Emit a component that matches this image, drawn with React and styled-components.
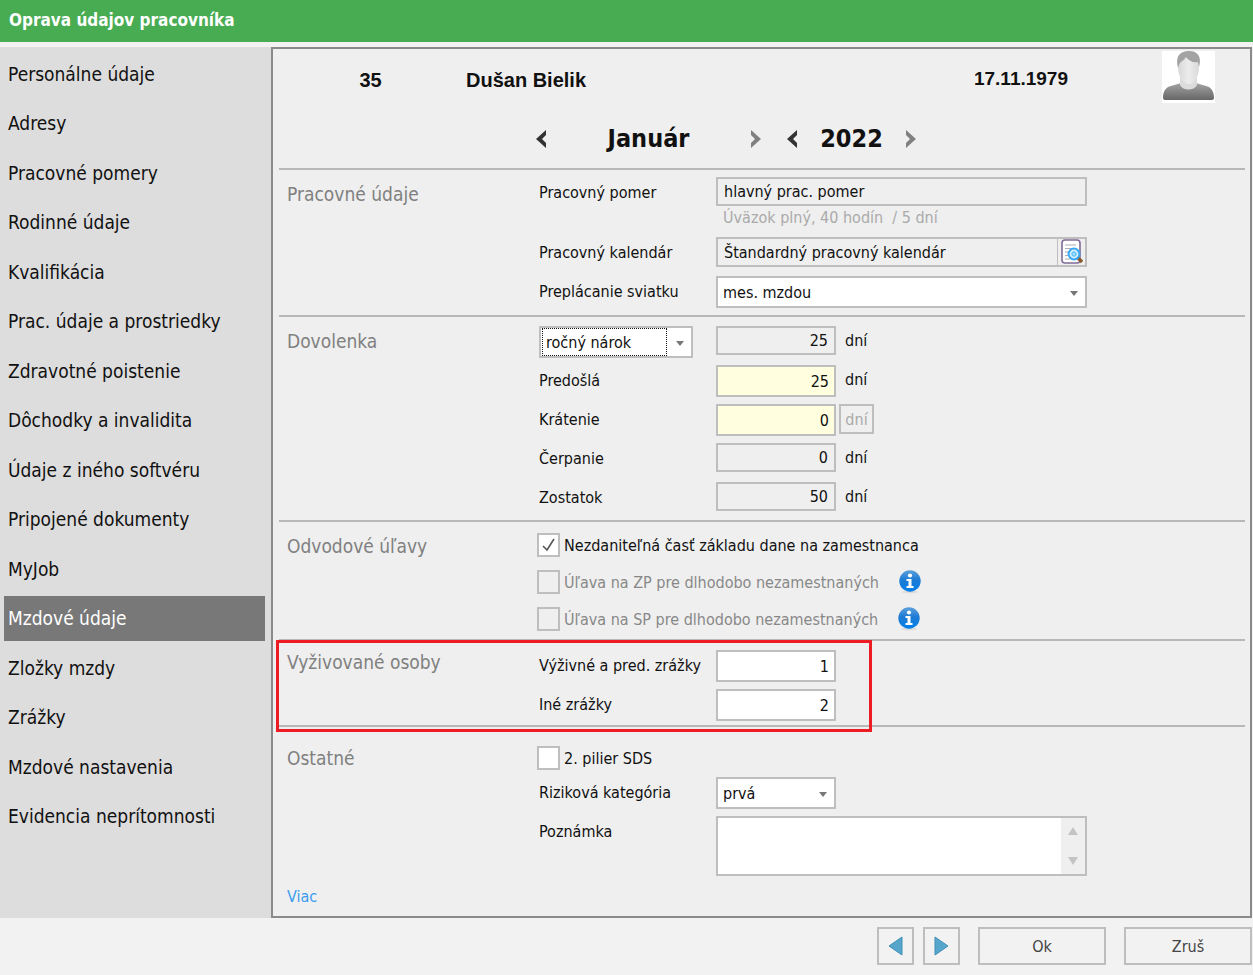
import React from 'react';
import styled, { createGlobalStyle, css } from 'styled-components';

const menuItems = [
  'Personálne údaje',
  'Adresy',
  'Pracovné pomery',
  'Rodinné údaje',
  'Kvalifikácia',
  'Prac. údaje a prostriedky',
  'Zdravotné poistenie',
  'Dôchodky a invalidita',
  'Údaje z iného softvéru',
  'Pripojené dokumenty',
  'MyJob',
  'Mzdové údaje',
  'Zložky mzdy',
  'Zrážky',
  'Mzdové nastavenia',
  'Evidencia neprítomnosti',
];

const holidayRows = [
  { id: 'predosla', label: 'Predošlá', value: '25', editable: true },
  { id: 'kratenie', label: 'Krátenie', value: '0', editable: true, unitButton: true },
  { id: 'cerpanie', label: 'Čerpanie', value: '0' },
  { id: 'zostatok', label: 'Zostatok', value: '50' },
];

const Chevron = ({ next }) => (
  <svg width="12" height="20" viewBox="0 0 12 20" fill="currentColor">
    {next ? <path d="M1 1v5l4 4-4 4v5l10-9z" /> : <path d="M11 1v5l-4 4 4 4v5L1 10z" />}
  </svg>
);

const Avatar = () => (
  <svg width="53" height="52" viewBox="0 0 53 52" role="img" aria-label="Fotografia">
    <defs>
      <linearGradient id="shirt" x1="0" y1="0" x2="0" y2="1">
        <stop offset="0" stopColor="#a4a4a4" />
        <stop offset="1" stopColor="#666" />
      </linearGradient>
      <linearGradient id="face" x1="0" y1="0" x2="1" y2="0">
        <stop offset="0" stopColor="#d8d8d8" />
        <stop offset="0.5" stopColor="#ececec" />
        <stop offset="1" stopColor="#dadada" />
      </linearGradient>
    </defs>
    <rect width="53" height="52" fill="#fff" />
    <path d="M1 47c0-7 3-11 8-12l10-3h15l10 3c5 1 8 5 8 12 0 1-1 2-2 2H3c-1 0-2-1-2-2z" fill="url(#shirt)" />
    <path d="M18 27h17v7c-3 6-14 6-17 0z" fill="#dcdcdc" />
    <path d="M16 12C16 4 21 2 27 2s10 2 10 10c0 5 0 10-2 14-2 5-5 7-8 7s-7-2-9-7c-2-4-2-9-2-14z" fill="url(#face)" />
    <path d="M16 17C13 5 18 0 27 0s13 6 10 16l-1-5c-5 1-9-1-12-5-2 4-6 4-7 8z" fill="#a3a3a3" />
  </svg>
);

const CalendarIcon = () => (
  <svg width="22" height="26" viewBox="0 0 22 26">
    <rect x="1" y="1" width="18" height="23" rx="3" fill="#fff" stroke="#806c96" strokeWidth="1.6" />
    <path d="M4 6h11M4 9.500h12M4 13h5M4 16.500h4M4 20h5" stroke="#a9a9b4" strokeWidth="1.1" />
    <path d="M17 19l4 4" stroke="#8a5a2b" strokeWidth="3.4" />
    <circle cx="13" cy="15" r="5.4" fill="#d3f0ff" stroke="#3aa8f5" strokeWidth="2" />
    <circle cx="13" cy="15" r="2.2" fill="#9adcff" stroke="#4db8f5" />
  </svg>
);

const InfoIcon = () => (
  <svg width="24" height="24" viewBox="0 0 24 24">
    <defs>
      <linearGradient id="info" x1="0" y1="0" x2="0" y2="1">
        <stop offset="0" stopColor="#5b9fdc" />
        <stop offset="0.45" stopColor="#1d7bd4" />
        <stop offset="1" stopColor="#0580ea" />
      </linearGradient>
    </defs>
    <ellipse cx="11" cy="22" rx="8" ry="1.5" fill="#ddd" />
    <circle cx="11" cy="11" r="10.7" fill="url(#info)" />
    <circle cx="11" cy="5.5" r="2.1" fill="#fff" />
    <path d="M7.500 9h5v7h2v2h-7v-2h2v-5h-2z" fill="#fff" />
  </svg>
);

const Triangle = ({ up }) => (
  <svg width="10" height="10" viewBox="0 0 10 10" fill="currentColor">
    {up ? <path d="M0 9h10L5 1z" /> : <path d="M0 1h10L5 9z" />}
  </svg>
);

const Select = ({ options, id, label, width, focused }) => (
  <SelectBox $width={width} $focused={focused}>
    <NativeSelect id={id} aria-label={label}>
      {options.map((option) => <option key={option}>{option}</option>)}
    </NativeSelect>
    <Arrow width="8" height="5" viewBox="0 0 8 5"><path d="M0 0h8L4 5z" /></Arrow>
  </SelectBox>
);

const App = () => {
  return (
    <Window>
      <GlobalStyle />
      <TitleBar>Oprava údajov pracovníka</TitleBar>
      <Body>
        <Sidebar>
          {menuItems.map((item) => (
            <MenuItem key={item} href="#" $active={item === 'Mzdové údaje'}>{item}</MenuItem>
          ))}
        </Sidebar>
        <Panel>
          <Person>
            <PersonNumber>35</PersonNumber>
            <PersonName>Dušan Bielik</PersonName>
            <PersonDate>17.11.1979</PersonDate>
            <Avatar />
          </Person>
          <Period>
            <Step aria-label="Predchádzajúci mesiac"><Chevron /></Step>
            <Month>Január</Month>
            <Step aria-label="Nasledujúci mesiac" disabled><Chevron next /></Step>
            <YearGroup>
              <Step aria-label="Predchádzajúci rok"><Chevron /></Step>
              <Year>2022</Year>
              <Step aria-label="Nasledujúci rok" disabled><Chevron next /></Step>
            </YearGroup>
          </Period>

          <Section>
            <SectionTitle>Pracovné údaje</SectionTitle>
            <Rows $top={7} $bottom={7}>
              <Row>
                <Label htmlFor="pomer">Pracovný pomer</Label>
                <Stack>
                  <Input id="pomer" readOnly defaultValue="hlavný prac. pomer" />
                  <Hint>Úväzok plný, 40 hodín&nbsp; / 5 dní</Hint>
                </Stack>
              </Row>
              <Row>
                <Label htmlFor="kalendar">Pracovný kalendár</Label>
                <Lookup>
                  <LookupInput id="kalendar" readOnly defaultValue="Štandardný pracovný kalendár" />
                  <LookupButton aria-label="Vybrať kalendár"><CalendarIcon /></LookupButton>
                </Lookup>
              </Row>
              <Row>
                <Label htmlFor="sviatok">Preplácanie sviatku</Label>
                <Select id="sviatok" width={371} options={['mes. mzdou']} />
              </Row>
            </Rows>
          </Section>

          <Section>
            <SectionTitle>Dovolenka</SectionTitle>
            <Rows $top={9} $bottom={6}>
              <Row>
                <LabelCell>
                  <Select label="Typ nároku" width={154} focused options={['ročný nárok']} />
                </LabelCell>
                <NumberInput aria-label="Ročný nárok" readOnly defaultValue="25" />
                <Unit>dní</Unit>
              </Row>
              {holidayRows.map((row) => (
                <Row key={row.id}>
                  <Label htmlFor={row.id}>{row.label}</Label>
                  <NumberInput id={row.id} readOnly={!row.editable} $yellow={row.editable} defaultValue={row.value} />
                  {row.unitButton ? <UnitButton disabled>dní</UnitButton> : <Unit>dní</Unit>}
                </Row>
              ))}
            </Rows>
          </Section>

          <Section>
            <SectionTitle>Odvodové úľavy</SectionTitle>
            <Rows $top={11} $bottom={8} $gap={13}>
              <CheckRow>
                <CheckLabel><Checkbox defaultChecked />Nezdaniteľná časť základu dane na zamestnanca</CheckLabel>
              </CheckRow>
              <CheckRow>
                <CheckLabel $disabled><Checkbox disabled />Úľava na ZP pre dlhodobo nezamestnaných</CheckLabel>
                <InfoIcon />
              </CheckRow>
              <CheckRow>
                <CheckLabel $disabled><Checkbox disabled />Úľava na SP pre dlhodobo nezamestnaných</CheckLabel>
                <InfoIcon />
              </CheckRow>
            </Rows>
          </Section>

          <Section>
            <SectionTitle $top={9}>Vyživované osoby</SectionTitle>
            <Rows $top={9} $bottom={4}>
              <Row>
                <Label htmlFor="vyzivne">Výživné a pred. zrážky</Label>
                <NumberInput id="vyzivne" defaultValue="1" />
              </Row>
              <Row>
                <Label htmlFor="ine">Iné zrážky</Label>
                <NumberInput id="ine" defaultValue="2" />
              </Row>
            </Rows>
            <Highlight />
          </Section>

          <Section $last>
            <SectionTitle $top={19}>Ostatné</SectionTitle>
            <Rows $top={19} $bottom={8}>
              <CheckRow>
                <CheckLabel><Checkbox />2. pilier SDS</CheckLabel>
              </CheckRow>
              <Row>
                <Label htmlFor="riziko">Riziková kategória</Label>
                <Select id="riziko" width={120} options={['prvá']} />
              </Row>
              <Row>
                <Label htmlFor="poznamka">Poznámka</Label>
                <NoteBox>
                  <Note id="poznamka" />
                  <ScrollTrack><Triangle up /><Triangle /></ScrollTrack>
                </NoteBox>
              </Row>
            </Rows>
          </Section>
          <More href="#">Viac</More>
        </Panel>
      </Body>
      <Footer>
        <ArrowGroup>
          <Button $small aria-label="Predchádzajúci">
            <svg width="16" height="20" viewBox="0 0 16 20"><path d="M14 1v18L1 10z" fill="#56a5cb" stroke="#3f8fb8" /></svg>
          </Button>
          <Button $small aria-label="Nasledujúci">
            <svg width="16" height="20" viewBox="0 0 16 20"><path d="M1 1v18l13-9z" fill="#56a5cb" stroke="#3f8fb8" /></svg>
          </Button>
        </ArrowGroup>
        <Button>Ok</Button>
        <Button>Zruš</Button>
      </Footer>
    </Window>
  );
};

export default App;

const GlobalStyle = createGlobalStyle`
  * {
    box-sizing: border-box;
  }

  body {
    margin: 0;
    background: #f2f2f2;
  }

  body, button, input, select, textarea {
    font-family: 'DejaVu Sans Condensed', 'Noto Sans', sans-serif;
    font-size: 16px;
    color: #111;
  }

  svg {
    display: block;
    flex: none;
  }
`;

const Window = styled.div`
  min-height: 100vh;
  display: flex;
  flex-direction: column;
`;

const TitleBar = styled.header`
  height: 42px;
  padding: 0 9px;
  background: #48ac53;
  color: white;
  font-size: 17px;
  font-weight: bold;
  line-height: 40px;
`;

const Body = styled.div`
  flex: 1;
  display: flex;
  margin: 5px 1px 0 0;
`;

const Sidebar = styled.nav`
  width: 271px;
  padding: 2px 6px 77px 4px;
  background: #ddd;
  display: flex;
  flex-direction: column;
`;

const MenuItem = styled.a`
  flex: 1;
  display: flex;
  align-items: center;
  padding: 0 4px;
  border: solid #ddd;
  border-width: 2px 0;
  background: ${(props) => (props.$active ? '#787878' : 'transparent')};
  color: ${(props) => (props.$active ? 'white' : '#111')};
  font-size: 19px;
  line-height: 24px;
  text-decoration: none;
`;

const Panel = styled.main`
  flex: 1;
  padding: 2px 5px 6px 6px;
  background: #efefef;
  border: 2px solid #8a8a8a;
`;

const Person = styled.div`
  display: flex;
  padding-right: 30px;
  font-family: 'Liberation Sans', Arial, sans-serif;
  font-size: 20px;
  font-weight: bold;
  line-height: 58px;
  height: 52px;
`;

const PersonNumber = styled.div`
  width: 187px;
  padding-right: 4px;
  text-align: center;
`;

const PersonName = styled.div`
  flex: 1;
`;

const PersonDate = styled.div`
  margin-right: 94px;
  font-size: 19px;
  line-height: 56px;
`;

const Period = styled.div`
  height: 67px;
  padding: 6px 0 0 252px;
  display: flex;
  align-items: center;
  border-bottom: 2px solid #b8b8b8;
  font-size: 25px;
  font-weight: bold;
`;

const Step = styled.button`
  width: 20px;
  padding: 0 4px;
  border: none;
  background: none;
  color: #333;

  &:disabled {
    color: #808080;
  }
`;

const Month = styled.div`
  width: 195px;
  text-align: center;
`;

const YearGroup = styled.div`
  display: flex;
  align-items: center;
  margin-left: 16px;
`;

const Year = styled.div`
  width: 99px;
  text-align: center;
`;

const Section = styled.section`
  position: relative;
  display: grid;
  grid-template-columns: 258px 1fr;
  border-bottom: ${(props) => (props.$last ? 'none' : '2px solid #b8b8b8')};
`;

const SectionTitle = styled.h2`
  margin: 0;
  padding: ${(props) => props.$top || 12}px 0 0 8px;
  color: #808080;
  font-size: 19px;
  font-weight: normal;
  line-height: 24px;
`;

const Rows = styled.div`
  display: flex;
  flex-direction: column;
  gap: ${(props) => props.$gap || 7}px;
  padding: ${(props) => props.$top}px 0 ${(props) => props.$bottom}px;
`;

const Row = styled.div`
  display: flex;
  align-items: flex-start;
  min-height: 32px;
`;

const Label = styled.label`
  width: 179px;
  padding-left: 2px;
  line-height: 32px;
`;

const LabelCell = styled.div`
  width: 179px;
  padding-left: 2px;
`;

const Stack = styled.div`
  display: flex;
  flex-direction: column;
`;

const Input = styled.input`
  width: 371px;
  height: 29px;
  padding: 0 6px;
  border: 2px solid #bebebe;
  border-radius: 0;
  background: #efefef;
  outline: none;
`;

const NumberInput = styled(Input)`
  width: 120px;
  text-align: right;

  ${(props) => !props.readOnly && css`
    height: 32px;
    padding-right: 5px;
    background: ${props.$yellow ? '#ffffe0' : 'white'};
  `}
`;

const Hint = styled.div`
  padding-left: 7px;
  color: #aaa;
  line-height: 24px;
`;

const Lookup = styled.div`
  display: flex;
  width: 371px;
  height: 30px;
  border: 2px solid #bebebe;
`;

const LookupInput = styled.input`
  flex: 1;
  padding: 0 6px;
  border: none;
  border-right: 1px solid #bebebe;
  background: transparent;
  outline: none;
`;

const LookupButton = styled.button`
  width: 27px;
  padding: 0 3px;
  border: none;
  background: none;
`;

const SelectBox = styled.div`
  position: relative;
  width: ${(props) => props.$width}px;
  height: 32px;

  ${(props) => props.$focused && css`
    &::after {
      content: '';
      position: absolute;
      inset: 2px 26px 2px 3px;
      border: 1px dotted #111;
      pointer-events: none;
    }
  `}
`;

const NativeSelect = styled.select`
  appearance: none;
  width: 100%;
  height: 100%;
  padding: 0 5px;
  border: 2px solid #bebebe;
  border-radius: 0;
  background: white;
  outline: none;
`;

const Arrow = styled.svg`
  position: absolute;
  top: 15px;
  right: 9px;
  fill: #777;
  pointer-events: none;
`;

const Unit = styled.span`
  padding-left: 9px;
  line-height: 30px;
`;

const UnitButton = styled.button`
  width: 35px;
  height: 30px;
  margin-left: 3px;
  padding: 0;
  border: 2px solid #bebebe;
  background: #efefef;
  color: #aaa;
`;

const CheckRow = styled.div`
  display: flex;
  align-items: center;
  gap: 20px;
  height: 24px;
`;

const CheckLabel = styled.label`
  display: flex;
  align-items: center;
  gap: 4px;
  color: ${(props) => (props.$disabled ? '#888' : '#111')};
`;

const Checkbox = styled.input.attrs({ type: 'checkbox' })`
  appearance: none;
  width: 23px;
  height: 24px;
  margin: 0;
  border: 2px solid #bebebe;
  background: white center no-repeat;

  &:checked {
    background-image: url("data:image/svg+xml,%3Csvg xmlns='http://www.w3.org/2000/svg' width='14' height='14'%3E%3Cpath d='M1 8l4 4L12 1' fill='none' stroke='%23555' stroke-width='1.6'/%3E%3C/svg%3E");
  }

  &:disabled {
    background-color: #efefef;
  }
`;

/* Red frame drawn over the section and its dividers */
const Highlight = styled.div`
  position: absolute;
  inset: -1px auto -7px -3px;
  width: 596px;
  border: 3px solid #ed1c24;
  pointer-events: none;
`;

const NoteBox = styled.div`
  display: flex;
  width: 371px;
  height: 60px;
  border: 2px solid #bebebe;
`;

const Note = styled.textarea`
  flex: 1;
  border: none;
  background: white;
  outline: none;
  resize: none;
`;

const ScrollTrack = styled.div`
  display: flex;
  flex-direction: column;
  align-items: center;
  justify-content: space-between;
  width: 24px;
  padding: 8px 0;
  background: #efefef;
  color: #c4c4c4;
`;

const More = styled.a`
  display: inline-block;
  padding-left: 8px;
  color: #3b9cf0;
  line-height: 26px;
  text-decoration: none;
`;

const Footer = styled.footer`
  display: flex;
  justify-content: flex-end;
  gap: 18px;
  padding: 9px 1px 10px;
`;

const ArrowGroup = styled.div`
  display: flex;
  gap: 9px;
`;

const Button = styled.button`
  display: flex;
  align-items: center;
  justify-content: center;
  width: ${(props) => (props.$small ? 37 : 128)}px;
  height: 38px;
  padding: 0;
  border: 2px solid #bebebe;
  background: #f2f2f2;
  color: #444;
`;
